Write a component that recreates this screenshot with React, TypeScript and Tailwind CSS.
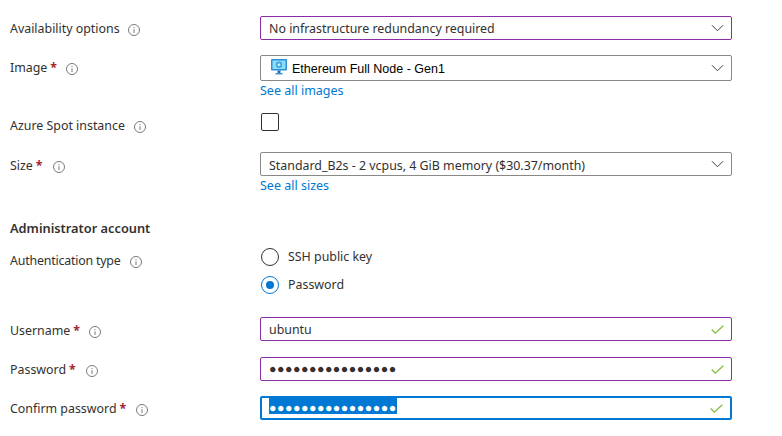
import type { ReactNode } from "react";

const FONT = "font-['Noto_Sans',sans-serif]";

function InfoIcon({ gap }: { gap: string }) {
  return (
    <svg viewBox="0 0 12 12" className={`w-3 h-3 shrink-0 ${gap}`} fill="none">
      <circle cx="6" cy="6" r="5.5" stroke="#7a7a7a" />
      <path d="M6 5.2V9" stroke="#7a7a7a" />
      <path d="M6 3v1.1" stroke="#7a7a7a" />
    </svg>
  );
}

function Label({ text, required, gap, tight }: { text: string; required?: boolean; gap: string; tight?: boolean }) {
  return (
    <div className="flex items-center h-6 pt-[3px] text-[12.4px] text-[#323130]">
      <span className={tight ? "tracking-[-0.2px]" : ""}>{text}</span>
      {required && <span className="ml-[3px] text-[#a4262c] font-bold">*</span>}
      <InfoIcon gap={gap} />
    </div>
  );
}

function Chevron() {
  return (
    <svg viewBox="0 0 14 8" className="w-[13px] h-2 shrink-0" fill="none">
      <path d="M1 1l6 6 6-6" stroke="#323130" />
    </svg>
  );
}

function Check() {
  return (
    <svg viewBox="0 0 13 9" className="w-[13px] h-[9px] shrink-0" fill="none">
      <path d="M.7 4.5l3.6 3.6L12.3.7" stroke="#7fba3c" strokeWidth="1.2" />
    </svg>
  );
}

function VmIcon() {
  return (
    <svg viewBox="0 0 16 16" className="w-4 h-4 shrink-0 -mt-[2px]">
      <rect x="0" y="0" width="16" height="11.5" rx="1" fill="#2f8fd6" />
      <rect x="1.5" y="1.5" width="13" height="8.5" fill="#8fdcf5" />
      <circle cx="8" cy="5.8" r="3.2" fill="#3fa7e3" />
      <circle cx="8" cy="5.8" r="1.4" fill="#d3f3fc" />
      <rect x="6.5" y="11.5" width="3" height="2.5" fill="#1f6fb5" />
      <rect x="4.5" y="14" width="7" height="1.5" fill="#3e9ad8" />
    </svg>
  );
}

function Box({ children, tone, height }: { children: ReactNode; tone: "purple" | "gray" | "blue"; height: string }) {
  const border =
    tone === "purple"
      ? "border border-[#8a2da5]"
      : tone === "blue"
        ? "border-2 border-[#0078d4]"
        : "border border-[#8a8886]";
  return (
    <div className={`flex items-center justify-between w-[472px] rounded-[2px] pr-[7px] text-[12.4px] text-[#323130] ${height} ${border}`}>
      {children}
    </div>
  );
}

function Link({ text }: { text: string }) {
  return <div className="h-[18px] pt-[1px] leading-[18px] text-[12.5px] text-[#0078d4]">{text}</div>;
}

function Radio({ checked, text }: { checked?: boolean; text: string }) {
  return (
    <div className="flex items-center gap-[9px] h-[18px] text-[12.4px] text-[#323130]">
      <div className={`flex items-center justify-center w-[18px] h-[18px] rounded-full border ${checked ? "border-[#0078d4]" : "border-[#323130]"}`}>
        {checked && <div className="w-2 h-2 rounded-full bg-[#0078d4]" />}
      </div>
      <span>{text}</span>
    </div>
  );
}

function Row({ label, children, className }: { label: ReactNode; children: ReactNode; className: string }) {
  return (
    <div className={`grid grid-cols-[250px_472px] ${className}`}>
      <div>{label}</div>
      <div>{children}</div>
    </div>
  );
}

export default function App() {
  return (
    <div className={`w-[782px] h-[436px] overflow-hidden bg-white pl-[10px] pt-4 ${FONT}`}>
      <Row className="" label={<Label text="Availability options" gap="ml-[8px]" />}>
        <Box tone="purple" height="h-6">
          <span className="pl-2 pt-[2px]">No infrastructure redundancy required</span>
          <Chevron />
        </Box>
      </Row>

      <Row className="mt-[15px]" label={<Label text="Image" required gap="ml-[9px]" />}>
        <Box tone="gray" height="h-[26px]">
          <span className="flex items-center gap-[5px] pl-[10px] font-['Liberation_Sans',sans-serif] text-[12.5px] text-black">
            <VmIcon />
            <span className="pt-[2px]">Ethereum Full Node - Gen1</span>
          </span>
          <Chevron />
        </Box>
        <Link text="See all images" />
      </Row>

      <Row className="mt-[14px]" label={<Label text="Azure Spot instance" gap="ml-[9px]" />}>
        <div className="pl-[1px]">
          <div className="w-[18px] h-[18px] rounded-[2px] border border-[#323130]" />
        </div>
      </Row>

      <Row className="mt-[15px]" label={<div className="pt-[1px]"><Label text="Size" required gap="ml-[10px]" /></div>}>
        <Box tone="gray" height="h-6">
          <span className="pl-2 pt-[4px]">Standard_B2s - 2 vcpus, 4 GiB memory ($30.37/month)</span>
          <Chevron />
        </Box>
        <Link text="See all sizes" />
      </Row>

      <div className="mt-[25px] h-[18px] leading-[18px] text-[12.8px] font-semibold text-[#323130]">Administrator account</div>

      <Row className="mt-[1px]" label={<div className="pt-[10px]"><Label text="Authentication type" tight gap="ml-[9px]" /></div>}>
        <div className="flex flex-col gap-[10px] pt-[10px] pl-[1px]">
          <Radio text="SSH public key" />
          <Radio checked text="Password" />
        </div>
      </Row>

      <Row className="mt-[23px]" label={<div className="pt-[1px]"><Label text="Username" required gap="ml-[9px]" /></div>}>
        <Box tone="purple" height="h-6">
          <span className="pl-2 pt-[2px]">ubuntu</span>
          <Check />
        </Box>
      </Row>

      <Row className="mt-[15px]" label={<Label text="Password" required gap="ml-[10px]" />}>
        <Box tone="purple" height="h-6">
          <span className="pl-2 tracking-[0.5px] text-[#323130]">●●●●●●●●●●●●●●●●</span>
          <Check />
        </Box>
      </Row>

      <Row className="mt-[15px]" label={<Label text="Confirm password" required gap="ml-[10px]" />}>
        <Box tone="blue" height="h-6">
          <span className="ml-[7px] self-start h-4 bg-[#0078d4] text-white tracking-[0.5px] leading-5">●●●●●●●●●●●●●●●●</span>
          <Check />
        </Box>
      </Row>
    </div>
  );
}
